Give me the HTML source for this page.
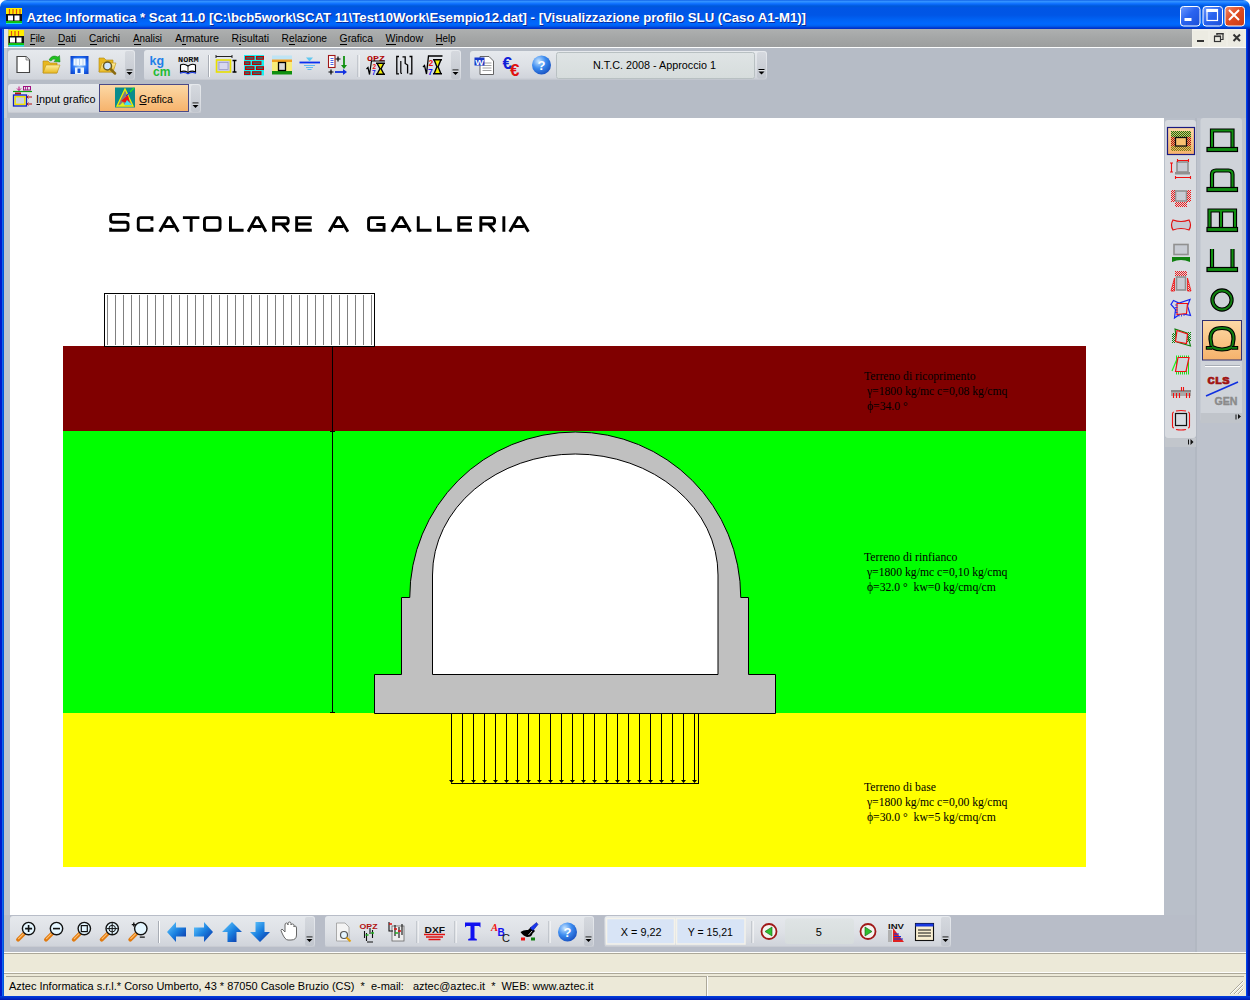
<!DOCTYPE html>
<html><head><meta charset="utf-8">
<style>
*{margin:0;padding:0;box-sizing:border-box}
html,body{width:1250px;height:1000px;overflow:hidden;background:#fff;font-family:"Liberation Sans",sans-serif}
.a{position:absolute}
#title{left:0;top:0;width:1250px;height:29px;border-radius:7px 7px 0 0;
background:linear-gradient(#0050e0 0px,#3a96ff 1px,#2a8cff 2px,#0a6cff 4px,#005ad8 6px,#0055e5 8px,#0056e6 15px,#0063f5 20px,#0068ff 24px,#0060ee 26px,#0035d0 28px,#0030c0 29px)}
#ttext{left:26px;top:6px;color:#fff;font-weight:bold;font-size:13px;white-space:nowrap;text-shadow:1px 1px 0 #0a1e8a;letter-spacing:0}
#menubar{left:4px;top:29px;width:1242px;height:18px;background:linear-gradient(#aeb0b0,#a4a6a6 50%,#9c9e9e)}
#wline{left:4px;top:47px;width:1242px;height:1px;background:#fbfcfd}
#band{left:4px;top:48px;width:1242px;height:70px;background:#b6bcc6}
.menu{top:31px;font-size:11px;color:#000;white-space:nowrap}
.tb{background:linear-gradient(#e4e7eb,#d9dde3 60%,#cdd2d9);border-radius:3px}
#canvas{left:10px;top:118px;width:1154px;height:797px;background:#fff;overflow:hidden}
#lborder{left:4px;top:118px;width:6px;height:834px;background:#bec3cc}
#rpanel{left:1164px;top:118px;width:82px;height:834px;background:#b9bfc9}
#bband{left:4px;top:915px;width:1242px;height:37px;background:#b8bdc8}
#beige{left:4px;top:952px;width:1242px;height:44px;background:#ece9d8}
</style></head><body>
<div class="a" id="title"></div>
<div class="a" style="left:0;top:29px;width:4px;height:971px;background:linear-gradient(90deg,#0018cc 0,#0018cc 2px,#1166ee 2px,#1166ee 3px,#0055dd 3px)"></div>
<div class="a" style="left:1246px;top:29px;width:4px;height:971px;background:linear-gradient(90deg,#0055dd 0,#0033ee 1px,#0018aa 2px,#001890 4px)"></div>
<div class="a" style="left:0;top:996px;width:1250px;height:4px;background:linear-gradient(#0040e0,#0018b0)"></div>
<div class="a" id="menubar"></div>
<div class="a" id="wline"></div>
<div class="a" id="band"></div>
<div class="a" id="lborder"></div>
<div class="a" id="rpanel"></div>
<div class="a" id="bband"></div>
<div class="a" id="beige"></div>
<div class="a" id="canvas"><svg class="a" style="left:0;top:0" width="1154" height="797" viewBox="10 118 1154 797">
<g shape-rendering="crispEdges">
<rect x="104.5" y="293.5" width="270" height="53" fill="#fff" stroke="#000" stroke-width="1"/>
<path d="M107.5 295V345M115.5 295V345M123.5 295V345M131.5 295V345M139.5 295V345M147.5 295V345M155.5 295V345M163.5 295V345M171.5 295V345M179.5 295V345M187.5 295V345M195.5 295V345M203.5 295V345M211.5 295V345M219.5 295V345M227.5 295V345M235.5 295V345M243.5 295V345M251.5 295V345M259.5 295V345M267.5 295V345M275.5 295V345M283.5 295V345M291.5 295V345M299.5 295V345M307.5 295V345M315.5 295V345M323.5 295V345M331.5 295V345M339.5 295V345M347.5 295V345M355.5 295V345M363.5 295V345M371.5 295V345" stroke="#808080" stroke-width="1"/>
<rect x="63" y="346" width="1023" height="85" fill="#800000"/>
<rect x="63" y="431" width="1023" height="282" fill="#00ff00"/>
<rect x="63" y="713" width="1023" height="154" fill="#ffff00"/>
<path d="M104 346.5H375" stroke="#000" stroke-width="1"/>
<path d="M332.5 346V713M330 431.5H335M330 712.5H335" stroke="#000" stroke-width="1"/>
</g>
<path d="M374.5 713.5V674.5H401.5V597.5H409.75A165.5 165.5 0 0 1 740.75 597.5H748.5V674.5H775.5V713.5Z" fill="#c0c0c0" stroke="#000" stroke-width="1"/>
<path d="M432.5 674.5V575A142.75 121 0 0 1 718.00 575V674.5Z" fill="#fff" stroke="#000" stroke-width="1"/>
<g shape-rendering="crispEdges">
<path d="M451.5 713V780M462.5 713V780M473.5 713V780M484.5 713V780M495.5 713V780M506.5 713V780M517.5 713V780M528.5 713V780M539.5 713V780M550.5 713V780M561.5 713V780M572.5 713V780M583.5 713V780M594.5 713V780M606.5 713V780M617.5 713V780M628.5 713V780M639.5 713V780M650.5 713V780M661.5 713V780M672.5 713V780M683.5 713V780M694.5 713V780M451 783.5H699M698.5 713V783.5" stroke="#000" stroke-width="1"/>
</g>
<path d="M449.0 780L454.0 780L451.5 783ZM460.0 780L465.0 780L462.5 783ZM471.0 780L476.0 780L473.5 783ZM482.0 780L487.0 780L484.5 783ZM493.0 780L498.0 780L495.5 783ZM504.0 780L509.0 780L506.5 783ZM515.0 780L520.0 780L517.5 783ZM526.0 780L531.0 780L528.5 783ZM537.0 780L542.0 780L539.5 783ZM548.0 780L553.0 780L550.5 783ZM559.0 780L564.0 780L561.5 783ZM570.0 780L575.0 780L572.5 783ZM581.0 780L586.0 780L583.5 783ZM592.0 780L597.0 780L594.5 783ZM604.0 780L609.0 780L606.5 783ZM615.0 780L620.0 780L617.5 783ZM626.0 780L631.0 780L628.5 783ZM637.0 780L642.0 780L639.5 783ZM648.0 780L653.0 780L650.5 783ZM659.0 780L664.0 780L661.5 783ZM670.0 780L675.0 780L672.5 783ZM681.0 780L686.0 780L683.5 783ZM692.0 780L697.0 780L694.5 783Z" fill="#000"/>
<text x="864" y="379.5" font-family="Liberation Serif" font-size="11.7" fill="#000"><tspan x="864" y="379.5">Terreno di ricoprimento</tspan><tspan x="864" y="394.5">&#160;γ=1800 kg/mc c=0,08 kg/cmq</tspan><tspan x="864" y="409.5">&#160;ϕ=34.0 °</tspan></text>
<text x="864" y="561" font-family="Liberation Serif" font-size="11.7" fill="#000"><tspan x="864" y="561">Terreno di rinfianco</tspan><tspan x="864" y="576">&#160;γ=1800 kg/mc c=0,10 kg/cmq</tspan><tspan x="864" y="591">&#160;ϕ=32.0 °&#160; kw=0 kg/cmq/cm</tspan></text>
<text x="864" y="791" font-family="Liberation Serif" font-size="11.7" fill="#000"><tspan x="864" y="791">Terreno di base</tspan><tspan x="864" y="806">&#160;γ=1800 kg/mc c=0,00 kg/cmq</tspan><tspan x="864" y="821">&#160;ϕ=30.0 °&#160; kw=5 kg/cmq/cm</tspan></text>
<path d="M128.05 216.85V214.35H113.15Q110.65 214.35 110.65 216.85V219.8Q110.65 222.3 113.15 222.3H125.55000000000001Q128.05 222.3 128.05 224.8V227.75Q128.05 230.25 125.55000000000001 230.25H110.65V227.75M151.95000000000002 220.64999999999998V217.64999999999998H140.75Q138.25 217.64999999999998 138.25 220.14999999999998V227.75Q138.25 230.25 140.75 230.25H151.95000000000002V227.25M159.70000000000002 231.7L167.85000000000002 217.64999999999998H170.25L178.39999999999998 231.7M164.25 226.47H173.85M182.9 217.64999999999998H199.4M191.15 217.64999999999998V231.7M206.95 217.64999999999998H217.55Q220.05 217.64999999999998 220.05 220.14999999999998V227.75Q220.05 230.25 217.55 230.25H206.95Q204.45 230.25 204.45 227.75V220.14999999999998Q204.45 217.64999999999998 206.95 217.64999999999998ZM230.45 216.2V230.25H243.6M248.10000000000002 231.7L255.8 217.64999999999998H258.2L265.9 231.7M252.425 226.47H261.575M273.65 231.7V217.64999999999998H285.75Q288.25 217.64999999999998 288.25 220.14999999999998V221.45Q288.25 223.95 285.75 223.95H273.65M281.68 223.95L288.55 231.7M311.8 217.64999999999998H296.65V230.25H311.8M296.65 223.95H310.8M329.2 231.7L337.34999999999997 217.64999999999998H339.74999999999994L347.9 231.7M333.75 226.47H343.34999999999997M384.05 217.64999999999998H371.05Q368.55 217.64999999999998 368.55 220.14999999999998V227.75Q368.55 230.25 371.05 230.25H384.05V224.45H376.3M391.8 231.7L399.95 217.64999999999998H402.34999999999997L410.5 231.7M396.35 226.47H405.95M418.25 216.2V230.25H431.5M438.45 216.2V230.25H451.8M472 217.64999999999998H458.75V230.25H472M458.75 223.95H471M480.84999999999997 231.7V217.64999999999998H492.05Q494.55 217.64999999999998 494.55 220.14999999999998V221.45Q494.55 223.95 492.05 223.95H480.84999999999997M488.385 223.95L494.85 231.7M503.84999999999997 216.2V231.7M509.7 231.7L517.8499999999999 217.64999999999998H520.25L528.4000000000001 231.7M514.25 226.47H523.85" fill="none" stroke="#000" stroke-width="2.9" stroke-linejoin="miter"/>
</svg></div>
<svg class="a" style="left:0;top:0" width="1250" height="1000" font-family="Liberation Sans">
<defs>
<linearGradient id="gTB" x1="0" y1="0" x2="0" y2="1"><stop offset="0" stop-color="#e6e9ed"/><stop offset="0.55" stop-color="#dde0e5"/><stop offset="1" stop-color="#cfd3da"/></linearGradient>
<linearGradient id="gBtnBlue" x1="0" y1="0" x2="1" y2="1"><stop offset="0" stop-color="#6e9bff"/><stop offset="0.45" stop-color="#2a64f0"/><stop offset="1" stop-color="#1a4fd8"/></linearGradient>
<linearGradient id="gBtnRed" x1="0" y1="0" x2="1" y2="1"><stop offset="0" stop-color="#f08a6a"/><stop offset="0.45" stop-color="#e04c22"/><stop offset="1" stop-color="#c83a14"/></linearGradient>
<linearGradient id="gOrange" x1="0" y1="0" x2="0" y2="1"><stop offset="0" stop-color="#fcd9a6"/><stop offset="1" stop-color="#f6b26b"/></linearGradient>
<linearGradient id="gGrip" x1="0" y1="0" x2="0" y2="1"><stop offset="0" stop-color="#c8ccd3"/><stop offset="1" stop-color="#b4b9c2"/></linearGradient>
<linearGradient id="gNTC" x1="0" y1="0" x2="0" y2="1"><stop offset="0" stop-color="#dfe4e5"/><stop offset="1" stop-color="#d6dcdc"/></linearGradient>
<radialGradient id="gHelp" cx="0.35" cy="0.3" r="0.75"><stop offset="0" stop-color="#c8e4ff"/><stop offset="0.5" stop-color="#3c8cf0"/><stop offset="1" stop-color="#1850c0"/></radialGradient>
<linearGradient id="gArrow" x1="0" y1="0" x2="1" y2="1"><stop offset="0" stop-color="#6cd0ff"/><stop offset="0.5" stop-color="#1a80e0"/><stop offset="1" stop-color="#0a2ca0"/></linearGradient>
<radialGradient id="gFloppyR" cx="0.5" cy="0.5" r="0.7"><stop offset="0" stop-color="#9cd0ff"/><stop offset="0.6" stop-color="#1e6af0"/><stop offset="1" stop-color="#0838c0"/></radialGradient>
<linearGradient id="gFloppy" x1="0" y1="0" x2="0" y2="1"><stop offset="0" stop-color="#1c5ce8"/><stop offset="1" stop-color="#0a3cb8"/></linearGradient>
<linearGradient id="gFolder" x1="0" y1="0" x2="0" y2="1"><stop offset="0" stop-color="#fff0a0"/><stop offset="1" stop-color="#e8b820"/></linearGradient>
<pattern id="pRed" width="2" height="2" patternUnits="userSpaceOnUse"><rect width="1" height="1" fill="#f01818"/><rect x="1" y="1" width="1" height="1" fill="#f01818"/></pattern>
<pattern id="pGreen" width="2" height="2" patternUnits="userSpaceOnUse"><rect width="2" height="2" fill="#e8b070"/><rect width="1" height="1" fill="#108010"/><rect x="1" y="1" width="1" height="1" fill="#108010"/></pattern>
<pattern id="pRedO" width="2" height="2" patternUnits="userSpaceOnUse"><rect width="2" height="2" fill="#e8b070"/><rect width="1" height="1" fill="#b01010"/><rect x="1" y="1" width="1" height="1" fill="#b01010"/></pattern>
<pattern id="pOlive" width="2" height="2" patternUnits="userSpaceOnUse"><rect width="2" height="2" fill="#e8b070"/><rect width="1" height="1" fill="#808010"/><rect x="1" y="1" width="1" height="1" fill="#808010"/></pattern>
<pattern id="pGreenT" width="2" height="2" patternUnits="userSpaceOnUse"><rect width="1" height="1" fill="#108010"/><rect x="1" y="1" width="1" height="1" fill="#108010"/></pattern>
<pattern id="pLime" width="2" height="2" patternUnits="userSpaceOnUse"><rect width="1" height="2" fill="#20e020"/></pattern>
</defs>
<g><rect x="6" y="8" width="16" height="16" fill="#ffee00"/><rect x="6" y="14" width="16" height="9" fill="#111"/><path d="M9.5 9v5M13 9v5M16.5 9v5M20 9v5" stroke="#e05010" stroke-width="1.2"/><rect x="8" y="15.5" width="5" height="5" fill="#fff"/><rect x="14.5" y="15.5" width="5" height="5" fill="#fff"/><rect x="6" y="21" width="16" height="2" fill="#10c010"/><rect x="6" y="23" width="16" height="1" fill="#20e0e0"/></g>
<text x="26.5" y="21.5" font-size="13.5" fill="#fff" font-weight="bold" text-anchor="start" textLength="779.5" lengthAdjust="spacingAndGlyphs" style="text-shadow:1px 1px 0 #0b2a99">Aztec Informatica * Scat 11.0 [C:\bcb5work\SCAT 11\Test10Work\Esempio12.dat] - [Visualizzazione profilo SLU (Caso A1-M1)]</text>
<rect x="1180.5" y="6.5" width="19.5" height="19.5" rx="3" fill="url(#gBtnBlue)" stroke="#fff" stroke-width="1"/>
<rect x="1203.0" y="6.5" width="19.5" height="19.5" rx="3" fill="url(#gBtnBlue)" stroke="#fff" stroke-width="1"/>
<rect x="1225.0" y="6.5" width="19.5" height="19.5" rx="3" fill="url(#gBtnRed)" stroke="#fff" stroke-width="1"/>
<rect x="1184.5" y="18" width="7" height="3" fill="#fff"/>
<rect x="1207" y="9.5" width="10.5" height="11" fill="none" stroke="#fff" stroke-width="1.2"/><rect x="1206.5" y="9" width="11.5" height="3" fill="#fff"/>
<path d="M1229 10L1239 20M1239 10L1229 20" stroke="#fff" stroke-width="2"/>
<rect x="4" y="29" width="4" height="18" fill="#e4e4e4"/><rect x="4" y="48" width="3" height="70" fill="#c8ccd2"/>
<g><rect x="8.5" y="30" width="15.5" height="16" fill="#ffee00"/><rect x="8.5" y="36" width="15.5" height="9" fill="#111"/><path d="M11.5 31v5M15 31v5M18.5 31v5" stroke="#e05010" stroke-width="1.2"/><rect x="10" y="37.5" width="5" height="5" fill="#fff"/><rect x="16.5" y="37.5" width="5" height="5" fill="#fff"/><rect x="8.5" y="43" width="15.5" height="2" fill="#10c010"/><rect x="8.5" y="45" width="15.5" height="1.5" fill="#20e0e0"/></g>
<text x="30" y="42" font-size="11" fill="#000" font-weight="normal" text-anchor="start" textLength="15" lengthAdjust="spacingAndGlyphs" >File</text>
<rect x="30" y="44" width="5" height="1" fill="#000"/>
<text x="58" y="42" font-size="11" fill="#000" font-weight="normal" text-anchor="start" textLength="18" lengthAdjust="spacingAndGlyphs" >Dati</text>
<rect x="58" y="44" width="7" height="1" fill="#000"/>
<text x="89" y="42" font-size="11" fill="#000" font-weight="normal" text-anchor="start" textLength="31" lengthAdjust="spacingAndGlyphs" >Carichi</text>
<rect x="90" y="44" width="7" height="1" fill="#000"/>
<text x="133" y="42" font-size="11" fill="#000" font-weight="normal" text-anchor="start" textLength="29" lengthAdjust="spacingAndGlyphs" >Analisi</text>
<rect x="134" y="44" width="7" height="1" fill="#000"/>
<text x="175" y="42" font-size="11" fill="#000" font-weight="normal" text-anchor="start" textLength="44" lengthAdjust="spacingAndGlyphs" >Armature</text>
<rect x="182" y="44" width="4" height="1" fill="#000"/>
<text x="231.6" y="42" font-size="11" fill="#000" font-weight="normal" text-anchor="start" textLength="37.4" lengthAdjust="spacingAndGlyphs" >Risultati</text>
<rect x="239" y="44" width="2" height="1" fill="#000"/>
<text x="281.6" y="42" font-size="11" fill="#000" font-weight="normal" text-anchor="start" textLength="45.4" lengthAdjust="spacingAndGlyphs" >Relazione</text>
<rect x="289" y="44" width="6" height="1" fill="#000"/>
<text x="339.6" y="42" font-size="11" fill="#000" font-weight="normal" text-anchor="start" textLength="33.4" lengthAdjust="spacingAndGlyphs" >Grafica</text>
<rect x="340" y="44" width="7" height="1" fill="#000"/>
<text x="385.6" y="42" font-size="11" fill="#000" font-weight="normal" text-anchor="start" textLength="37.4" lengthAdjust="spacingAndGlyphs" >Window</text>
<rect x="386" y="44" width="10" height="1" fill="#000"/>
<text x="435.6" y="42" font-size="11" fill="#000" font-weight="normal" text-anchor="start" textLength="20" lengthAdjust="spacingAndGlyphs" >Help</text>
<rect x="436" y="44" width="7" height="1" fill="#000"/>
<rect x="1192" y="29" width="54" height="18" fill="#efeee6"/>
<rect x="1193" y="31" width="15" height="15" fill="#ecebe2"/><rect x="1210" y="31" width="16" height="15" fill="#ecebe2"/><rect x="1228" y="31" width="15" height="15" fill="#ecebe2"/>
<rect x="1197" y="40" width="7" height="2" fill="#333"/>
<rect x="1214.5" y="36.5" width="6" height="5" fill="none" stroke="#333" stroke-width="1.2"/><rect x="1214" y="35.5" width="7" height="1.5" fill="#333"/><path d="M1217 35V33.5H1223V39.5H1221" fill="none" stroke="#333" stroke-width="1.2"/><rect x="1216.5" y="33" width="7" height="1.5" fill="#333"/>
<path d="M1233.5 34.5L1240 41M1240 34.5L1233.5 41" stroke="#333" stroke-width="2"/>
<rect x="8" y="50" width="127" height="30" rx="3" fill="url(#gTB)"/>
<rect x="8" y="79" width="127" height="1" fill="#c4c8cf" opacity="0.7"/>
<rect x="125" y="51" width="9" height="28" rx="2" fill="url(#gGrip)" opacity="0.55"/>
<path d="M126.5 70h6" stroke="#000" stroke-width="1"/><path d="M126.5 72h6l-3 3z" fill="#000"/>
<path d="M126.5 71h6" stroke="#fff" stroke-width="0.8" opacity="0.6"/>
<rect x="144" y="50" width="317" height="30" rx="3" fill="url(#gTB)"/>
<rect x="144" y="79" width="317" height="1" fill="#c4c8cf" opacity="0.7"/>
<rect x="451" y="51" width="9" height="28" rx="2" fill="url(#gGrip)" opacity="0.55"/>
<path d="M452.5 70h6" stroke="#000" stroke-width="1"/><path d="M452.5 72h6l-3 3z" fill="#000"/>
<path d="M452.5 71h6" stroke="#fff" stroke-width="0.8" opacity="0.6"/>
<rect x="470" y="51" width="297" height="28.5" rx="3" fill="url(#gTB)"/>
<rect x="470" y="78.5" width="297" height="1" fill="#c4c8cf" opacity="0.7"/>
<rect x="757" y="52" width="9" height="26.5" rx="2" fill="url(#gGrip)" opacity="0.55"/>
<path d="M758.5 69.5h6" stroke="#000" stroke-width="1"/><path d="M758.5 71.5h6l-3 3z" fill="#000"/>
<path d="M758.5 70.5h6" stroke="#fff" stroke-width="0.8" opacity="0.6"/>
<path d="M17 56.5H26L29.5 60V72.5H17Z" fill="#fff" stroke="#444" stroke-width="1.2"/><path d="M26 56.5V60H29.5" fill="#ddd" stroke="#777" stroke-width="0.8"/>
<path d="M43 61H48L50 63H57V73H43Z" fill="#e8b820" stroke="#b08810" stroke-width="0.6"/><path d="M43 73L46 65H60L57 73Z" fill="url(#gFolder)" stroke="#c09010" stroke-width="0.6"/>
<path d="M49 60Q52 54 58 57L59.5 55.5L60 62L54 61.5L56 59.5Q53 58 51 61Z" fill="#20c020" stroke="#108010" stroke-width="0.5"/>
<rect x="70.5" y="56" width="18" height="18" fill="url(#gFloppyR)"/><rect x="73.5" y="58.5" width="12" height="7" fill="#f0f8ff"/><path d="M76 59v6M79.5 59v6M83 59v6" stroke="#a8c8f0" stroke-width="0.8"/><rect x="75" y="67.5" width="9" height="6.5" fill="#e8f4ff"/><rect x="77.5" y="68.5" width="3" height="4.5" fill="#1a5ad8"/>
<path d="M99 58H104L106 60H113V72H99Z" fill="#e8b820" stroke="#b08810" stroke-width="0.6"/><path d="M99 72L102 63H116L113 72Z" fill="url(#gFolder)" stroke="#c09010" stroke-width="0.6"/>
<circle cx="107.5" cy="66" r="4" fill="#cfe6ff" stroke="#6a5a20" stroke-width="1.5"/><path d="M110.5 69L115 73.5" stroke="#8a6a10" stroke-width="2.5" stroke-linecap="round"/>
<text x="149.5" y="65" font-size="13.5" font-weight="bold" fill="#1e7fe8" textLength="14.5" lengthAdjust="spacingAndGlyphs">kg</text>
<text x="153" y="75.5" font-size="13" font-weight="bold" fill="#22bb33" textLength="17.5" lengthAdjust="spacingAndGlyphs">cm</text>
<text x="178" y="62" font-family="Liberation Mono" font-size="8" font-weight="bold" fill="#111" textLength="20.5" lengthAdjust="spacingAndGlyphs">NORM</text>
<path d="M188 66Q184 63 180.5 65V72Q184 70 188 72.5Q192 70 195.5 72V65Q192 63 188 66Z" fill="#fff" stroke="#000" stroke-width="1.1"/><path d="M188 66V72.5" stroke="#000" stroke-width="0.8"/><path d="M180 73.3Q184 71.5 188 73.8Q192 71.5 196 73.3" fill="none" stroke="#1030e0" stroke-width="1.2"/>
<rect x="208" y="55" width="1" height="22" fill="#a8adb5"/><rect x="209" y="55" width="1" height="22" fill="#fff"/>
<path d="M216 56.5H232M216 55V58M232 55V58" stroke="#222" stroke-width="1"/><rect x="216.5" y="60" width="14" height="12" fill="#c8c8e8" stroke="#e8e000" stroke-width="1.6"/><rect x="219" y="62.5" width="9" height="7" fill="#d8d8ee" stroke="#8888bb" stroke-width="0.6"/><path d="M234.5 60.5V72M232.5 60.5H236.5M232.5 72H236.5" stroke="#000" stroke-width="1.3"/>
<rect x="244" y="55" width="20" height="20.5" fill="#18f0f0"/>
<rect x="245.6" y="56.6" width="8.3" height="2.6" fill="#108888" stroke="#c00000" stroke-width="1.2"/><rect x="256.6" y="56.6" width="6.8" height="2.6" fill="#108888" stroke="#c00000" stroke-width="1.2"/><rect x="244.6" y="61.800000000000004" width="5.3" height="2.6" fill="#108888" stroke="#c00000" stroke-width="1.2"/><rect x="252.6" y="61.800000000000004" width="8.3" height="2.6" fill="#108888" stroke="#c00000" stroke-width="1.2"/><rect x="263.6" y="61.800000000000004" width="-0.19999999999999996" height="2.6" fill="#108888" stroke="#c00000" stroke-width="1.2"/><rect x="245.6" y="66.8" width="8.3" height="2.6" fill="#108888" stroke="#c00000" stroke-width="1.2"/><rect x="256.6" y="66.8" width="6.8" height="2.6" fill="#108888" stroke="#c00000" stroke-width="1.2"/><rect x="244.6" y="71.8" width="5.3" height="2.6" fill="#108888" stroke="#c00000" stroke-width="1.2"/><rect x="252.6" y="71.8" width="8.3" height="2.6" fill="#108888" stroke="#c00000" stroke-width="1.2"/><rect x="263.6" y="71.8" width="-0.19999999999999996" height="2.6" fill="#108888" stroke="#c00000" stroke-width="1.2"/>
<rect x="272" y="55.5" width="20" height="4" fill="#bfe4f4"/><rect x="272" y="59.5" width="20" height="2.5" fill="#f0a020"/><rect x="272" y="62" width="20" height="9" fill="#f8ec78"/><rect x="272" y="71" width="20" height="3.5" fill="#109010"/><rect x="278.5" y="62.5" width="7" height="8" fill="#d8d8d8" stroke="#000" stroke-width="1.3"/>
<path d="M299.5 62.5H320" stroke="#0a2ef0" stroke-width="1.8"/><path d="M306 57.5h7l-3.5 4z" fill="#60c8f0"/><path d="M304 65.5h11M306 67.5h7M307.5 69.5h4" stroke="#60b8f0" stroke-width="1"/>
<rect x="328.5" y="55.5" width="6.5" height="12" fill="#fff" stroke="#a01818" stroke-width="1.1"/><path d="M330.5 58.5h3M330.5 60.5h3M330.5 62.5h3M330.5 64.5h3" stroke="#2040e0" stroke-width="0.8"/>
<path d="M335.5 59h5M338 56.5v5" stroke="#000" stroke-width="1.2"/><path d="M344 56V66" stroke="#109010" stroke-width="1.8"/><path d="M341 65h6l-3 4z" fill="#109010"/>
<path d="M328.5 72h5M331 69.5v5" stroke="#000" stroke-width="1.2"/><path d="M335 72H344" stroke="#1030e0" stroke-width="1.8"/><path d="M343 69v6l4-3z" fill="#1030e0"/>
<rect x="357.5" y="55" width="1" height="22" fill="#a8adb5"/><rect x="358.5" y="55" width="1" height="22" fill="#fff"/>
<text x="367" y="60.5" font-family="Liberation Mono" font-size="8" font-weight="bold" fill="#b00808" textLength="18" lengthAdjust="spacingAndGlyphs">OPZ</text>
<path d="M366.5 69L368 67.5L369.5 74.5L371.5 61H385" fill="none" stroke="#000" stroke-width="1.2"/>
<text x="372.5" y="68.5" font-size="6.5" font-weight="bold" fill="#f01010">2</text><text x="372" y="75" font-size="6.5" font-weight="bold" fill="#1010f0">7</text>
<path d="M377.5 63.5L380.5 68.75L377.5 74H383.5L380.5 68.75L383.5 63.5Z" fill="#f4f000"/>
<path d="M377.2 63.5L379.9 68.75L377.2 74M383.8 63.5L381.1 68.75L383.8 74" fill="none" stroke="#000" stroke-width="1.4"/>
<path d="M376 63.3H385M376 74.2H385" stroke="#000" stroke-width="1.6"/>
<path d="M399 56.5H396.8V73.8H399M409.5 56.5H411.8V73.8H409.5" fill="none" stroke="#000" stroke-width="1.3"/>
<path d="M400.8 61V72.5Q400.8 73.5 402 73.5" fill="none" stroke="#000" stroke-width="1.2"/><path d="M402.5 56.8H405.2V63.5L407.6 65V73.6" fill="none" stroke="#000" stroke-width="1.3"/>
<path d="M423 67L424.5 65.5L426.5 74L428.5 56H442.5" fill="none" stroke="#000" stroke-width="1.3"/>
<text x="428.5" y="66" font-size="8.5" font-weight="bold" fill="#f01010">2</text><text x="428" y="74.5" font-size="8.5" font-weight="bold" fill="#1010f0">7</text>
<path d="M434.5 60L437.5 66.75L434.5 73.5H440.5L437.5 66.75L440.5 60Z" fill="#f4f000"/>
<path d="M434.2 60L436.9 66.75L434.2 73.5M440.8 60L438.1 66.75L440.8 73.5" fill="none" stroke="#000" stroke-width="1.4"/>
<path d="M433 59.8H442M433 73.7H442" stroke="#000" stroke-width="1.6"/>
<path d="M480 56.5H489L493.5 61V74.5H480Z" fill="#fff" stroke="#555" stroke-width="0.9"/><path d="M482.5 63h9M482.5 65.5h9M482.5 68h9M482.5 70.5h9" stroke="#888" stroke-width="0.8"/>
<rect x="474.5" y="57.5" width="10" height="8" fill="#1838c8"/><text x="475.3" y="64.5" font-size="7.5" font-weight="bold" fill="#fff" textLength="8.5" lengthAdjust="spacingAndGlyphs">W</text>
<text x="502.5" y="68.5" font-size="17" font-weight="bold" fill="#1020d8">€</text><text x="510" y="76" font-size="17" font-weight="bold" fill="#e01010">€</text>
<circle cx="541.5" cy="65" r="9.5" fill="url(#gHelp)"/><text x="541.5" y="70" font-size="13" font-weight="bold" fill="#fff" text-anchor="middle">?</text>
<rect x="556.5" y="52.5" width="198" height="26" rx="2" fill="url(#gNTC)" stroke="#b8c0c2" stroke-width="1"/>
<text x="593" y="69" font-size="11" fill="#000" font-weight="normal" text-anchor="start" textLength="123" lengthAdjust="spacingAndGlyphs" >N.T.C. 2008 - Approccio 1</text>
<rect x="8" y="84" width="193" height="29" rx="3" fill="url(#gTB)"/>
<rect x="8" y="112" width="193" height="1" fill="#c4c8cf" opacity="0.7"/>
<rect x="191" y="85" width="9" height="27" rx="2" fill="url(#gGrip)" opacity="0.55"/>
<path d="M192.5 103h6" stroke="#000" stroke-width="1"/><path d="M192.5 105h6l-3 3z" fill="#000"/>
<path d="M192.5 104h6" stroke="#fff" stroke-width="0.8" opacity="0.6"/>
<path d="M13 91.5H32" stroke="#10a010" stroke-width="1.2"/><path d="M19 86.5V90.5M17 88.5L19 90.5L21 88.5" fill="none" stroke="#c01080" stroke-width="1"/><rect x="23.5" y="86.5" width="7" height="3.5" fill="none" stroke="#a01080" stroke-width="1"/><path d="M25.5 87v3M27.5 87v3" stroke="#a01080" stroke-width="0.8"/>
<rect x="15" y="92.5" width="6" height="2" fill="#b01010"/><rect x="13.5" y="95" width="13" height="11" fill="#c8d0e0" stroke="#1020c0" stroke-width="1.3"/><rect x="15.2" y="96.7" width="9.6" height="7.6" fill="#c8d0e0" stroke="#f0e000" stroke-width="1.4"/>
<path d="M27 97h5M27 104h5" stroke="#b01010" stroke-width="1"/><path d="M28.5 95.5l-1.5 1.5l1.5 1.5M28.5 102.5l-1.5 1.5l1.5 1.5" fill="none" stroke="#b01010" stroke-width="0.8"/>
<text x="36" y="102.5" font-size="11.5" fill="#000" font-weight="normal" text-anchor="start" textLength="59.5" lengthAdjust="spacingAndGlyphs" >Input grafico</text>
<rect x="99.5" y="84.5" width="89" height="27" fill="url(#gOrange)" stroke="#4a4a88" stroke-width="1"/>
<rect x="115" y="87.5" width="20" height="20" fill="#0a8c8c"/><path d="M125 89L117 106H133Z" fill="#808080" stroke="#f0f000" stroke-width="1.3"/><path d="M121 101L128 95L130 104Z" fill="#f01010"/><path d="M127 100L132 105H124Z" fill="#40e0f0"/><path d="M119 106l4 -4l2 4z" fill="#e0f020"/><path d="M126 96L134 88" stroke="#1030f0" stroke-width="1"/><path d="M130 92L134 88" stroke="#20e020" stroke-width="1.2"/>
<text x="139" y="102.5" font-size="11.5" fill="#000" font-weight="normal" text-anchor="start" textLength="34" lengthAdjust="spacingAndGlyphs" >Grafica</text>
<rect x="139.5" y="104" width="7" height="1" fill="#000"/><rect x="36.5" y="104" width="3.5" height="1" fill="#000"/>
<rect x="1164" y="118" width="82" height="797" fill="#b9bfc9"/>
<rect x="1197" y="118" width="49" height="834" fill="#bdc2cc"/>
<rect x="1195" y="118" width="2" height="834" fill="#b2b8c2"/>
<rect x="1165" y="120" width="31" height="318" rx="3" fill="#d8dbe0"/>
<rect x="1167.5" y="127.5" width="27" height="27" fill="url(#gOrange)" stroke="#1a1a80" stroke-width="1.2"/>
<rect x="1171" y="131" width="20" height="6" fill="url(#pGreen)"/><rect x="1171" y="137" width="4" height="9" fill="url(#pRedO)"/><rect x="1187" y="137" width="4" height="9" fill="url(#pRedO)"/><rect x="1171" y="146" width="20" height="5" fill="url(#pOlive)"/>
<rect x="1175.5" y="137.5" width="11" height="8.5" fill="#f8c070" stroke="#111" stroke-width="1.3"/>
<rect x="1177" y="162" width="11" height="10" fill="#c8ccd4" stroke="#909090" stroke-width="1.6"/><rect x="1175" y="172" width="15" height="2.5" fill="#909090"/>
<path d="M1177 160.5h12M1175 177.5h16M1171.5 163v9M1170 163h3M1170 172h3M1175.5 176v3M1190.5 176v3M1177.5 159v3M1188.5 159v3" stroke="#f01010" stroke-width="1.1"/>
<rect x="1175.5" y="191" width="11" height="10" fill="#c8ccd4" stroke="#909090" stroke-width="1.6"/>
<rect x="1171" y="190" width="4" height="12" fill="url(#pRed)"/><rect x="1187" y="190" width="4" height="12" fill="url(#pRed)"/><rect x="1175" y="202" width="12" height="5" fill="url(#pRed)"/>
<path d="M1173 220Q1181 223 1189 220Q1192 225 1189 230Q1181 227 1173 230Q1170 225 1173 220Z" fill="#c8ccd4" stroke="#e01010" stroke-width="1.2"/>
<rect x="1174" y="244.5" width="14" height="10" fill="#c8ccd4" stroke="#909090" stroke-width="1.6"/><path d="M1172 257H1190V262Q1181 258 1172 262Z" fill="#108010"/>
<rect x="1175" y="271" width="12" height="5" fill="url(#pRed)"/><rect x="1176.5" y="277" width="9" height="13" fill="#c8ccd4" stroke="#909090" stroke-width="1.6"/><path d="M1174.5 278L1171 291H1174.5ZM1187.5 278L1191 291H1187.5Z" fill="url(#pRed)" stroke="#f01010" stroke-width="0.8"/>
<path d="M1173.5 300.5L1179 303L1190 299.5L1187.5 306L1190.5 315.5L1181 313.5L1174.5 318L1175.5 309.5L1171 304.5Z" fill="none" stroke="#1828f0" stroke-width="1.2"/>
<path d="M1177 303.5H1187.5L1186.5 313.5L1177 314.5Z" fill="#d0d4da" stroke="#f01010" stroke-width="1.2"/><path d="M1177.5 305h-2.5M1177.5 307.5h-2.5M1177.5 310h-2.5M1177.5 312.5h-2.5M1179 314.5v2M1181.5 314.5v2M1184 314v2" stroke="#1828f0" stroke-width="0.8"/>
<path d="M1175 329L1187 333L1190.5 346L1177 342Z" fill="none" stroke="#108010" stroke-width="1.1"/><rect x="1172" y="333" width="4" height="10" fill="url(#pGreenT)"/><rect x="1187" y="332" width="4" height="10" fill="url(#pGreenT)"/>
<path d="M1177 330.5L1187.5 334L1186.5 343.5L1175.5 341.5Z" fill="#d0d4da" stroke="#f01010" stroke-width="1.2"/>
<rect x="1176" y="355.5" width="13" height="19" fill="url(#pLime)"/><path d="M1172 371L1177 359" stroke="#20f020" stroke-width="1.2"/>
<path d="M1178 357.5H1189L1186 371.5H1175.5Z" fill="#d0d4da" stroke="#f01010" stroke-width="1.2"/>
<rect x="1171" y="390" width="20" height="6" fill="#a8a8a8"/><rect x="1171" y="390" width="20" height="2" fill="#888"/><path d="M1173.5 393v5M1176.5 393v5M1179.5 393v5M1186.5 393v5M1189.5 393v5M1181.5 387v4M1183.5 387v4" stroke="#f01010" stroke-width="1.1"/>
<rect x="1175.5" y="413.5" width="11" height="12" fill="#d8dce2" stroke="#111" stroke-width="1.2"/><path d="M1174 412Q1172.5 412 1172.5 414V426Q1172.5 428 1174 428M1188 412Q1189.5 412 1189.5 414V426Q1189.5 428 1188 428M1176 411Q1181 410 1186 411M1176 429.5Q1181 430.5 1186 429.5" fill="none" stroke="#f01010" stroke-width="1.1"/>
<rect x="1165" y="438" width="31" height="9" fill="#c2c6cc"/><path d="M1188.5 439.5v5" stroke="#111" stroke-width="1"/><path d="M1190.5 439l3 3l-3 3z" fill="#111"/>
<rect x="1200.5" y="118" width="41.5" height="304" rx="3" fill="#cfd3d9"/>
<rect x="1200.5" y="413" width="41.5" height="10" fill="#c0c4ca"/><path d="M1236 414.5v5" stroke="#111" stroke-width="1"/><path d="M1238 414l3 2.5l-3 2.5z" fill="#111"/>
<path d="M1212 148V130.5H1232.5V148" fill="none" stroke="#000" stroke-width="4.2" stroke-linejoin="miter"/><path d="M1212 148V130.5H1232.5V148" fill="none" stroke="#109010" stroke-width="2" stroke-linejoin="miter"/>
<rect x="1207" y="147.5" width="30.5" height="4" fill="#109010" stroke="#000" stroke-width="1.2"/>
<path d="M1212 188V174.5Q1212 170.5 1216 170.5H1228.5Q1232.5 170.5 1232.5 174.5V188" fill="none" stroke="#000" stroke-width="4.2" stroke-linejoin="miter"/><path d="M1212 188V174.5Q1212 170.5 1216 170.5H1228.5Q1232.5 170.5 1232.5 174.5V188" fill="none" stroke="#109010" stroke-width="2" stroke-linejoin="miter"/>
<rect x="1207" y="187.5" width="30.5" height="4" fill="#109010" stroke="#000" stroke-width="1.2"/>
<path d="M1209.5 210.5H1235V229H1209.5ZM1221 210.5V229" fill="none" stroke="#000" stroke-width="4.2" stroke-linejoin="miter"/><path d="M1209.5 210.5H1235V229H1209.5ZM1221 210.5V229" fill="none" stroke="#109010" stroke-width="2" stroke-linejoin="miter"/>
<rect x="1207" y="227.5" width="30.5" height="4" fill="#109010" stroke="#000" stroke-width="1.2"/>
<path d="M1212 249V268M1232.5 249V268" fill="none" stroke="#000" stroke-width="4.2" stroke-linejoin="miter"/><path d="M1212 249V268M1232.5 249V268" fill="none" stroke="#109010" stroke-width="2" stroke-linejoin="miter"/>
<rect x="1207" y="267.5" width="30.5" height="4" fill="#109010" stroke="#000" stroke-width="1.2"/>
<circle cx="1222" cy="300" r="9.6" fill="none" stroke="#000" stroke-width="4.2"/><circle cx="1222" cy="300" r="9.6" fill="none" stroke="#108010" stroke-width="2"/>
<rect x="1202.5" y="320.5" width="39" height="39.5" fill="url(#gOrange)" stroke="#303070" stroke-width="1"/>
<path d="M1211.8 347L1210.5 339Q1210 328 1222 328Q1234 328 1233.5 339L1232.2 347Q1222 352 1211.8 347Z" fill="none" stroke="#000" stroke-width="4.2"/><path d="M1211.8 347L1210.5 339Q1210 328 1222 328Q1234 328 1233.5 339L1232.2 347Q1222 352 1211.8 347Z" fill="none" stroke="#108010" stroke-width="2"/>
<path d="M1205.8 347.8H1212M1232 347.8H1238.2" stroke="#000" stroke-width="3.8"/><path d="M1206.8 347.8H1212M1232 347.8H1237.2" stroke="#108010" stroke-width="1.8"/>
<path d="M1205 365.5H1240" stroke="#a8adb5" stroke-width="1"/><path d="M1205 366.5H1240" stroke="#fff" stroke-width="1"/>
<text x="1207.5" y="384" font-family="Liberation Mono" font-size="11" font-weight="bold" fill="#a01010" stroke="#a01010" stroke-width="0.7" textLength="22" lengthAdjust="spacingAndGlyphs">CLS</text>
<path d="M1206 396L1238 382" stroke="#1030e0" stroke-width="1.6"/>
<text x="1214.5" y="405" font-size="11.5" font-weight="bold" fill="#8a8a8a" stroke="#8a8a8a" stroke-width="0.4" textLength="23" lengthAdjust="spacingAndGlyphs">GEN</text>
<rect x="10" y="916" width="305" height="31" rx="3" fill="url(#gTB)"/>
<rect x="10" y="946" width="305" height="1" fill="#c4c8cf" opacity="0.7"/>
<rect x="305" y="917" width="9" height="29" rx="2" fill="url(#gGrip)" opacity="0.55"/>
<path d="M306.5 937h6" stroke="#000" stroke-width="1"/><path d="M306.5 939h6l-3 3z" fill="#000"/>
<path d="M306.5 938h6" stroke="#fff" stroke-width="0.8" opacity="0.6"/>
<rect x="325" y="916" width="269" height="31" rx="3" fill="url(#gTB)"/>
<rect x="325" y="946" width="269" height="1" fill="#c4c8cf" opacity="0.7"/>
<rect x="584" y="917" width="9" height="29" rx="2" fill="url(#gGrip)" opacity="0.55"/>
<path d="M585.5 937h6" stroke="#000" stroke-width="1"/><path d="M585.5 939h6l-3 3z" fill="#000"/>
<path d="M585.5 938h6" stroke="#fff" stroke-width="0.8" opacity="0.6"/>
<rect x="604.5" y="916" width="346.5" height="31" rx="3" fill="url(#gTB)"/>
<rect x="604.5" y="946" width="346.5" height="1" fill="#c4c8cf" opacity="0.7"/>
<rect x="941" y="917" width="9" height="29" rx="2" fill="url(#gGrip)" opacity="0.55"/>
<path d="M942.5 937h6" stroke="#000" stroke-width="1"/><path d="M942.5 939h6l-3 3z" fill="#000"/>
<path d="M942.5 938h6" stroke="#fff" stroke-width="0.8" opacity="0.6"/>
<path d="M18.1 939.6L24.6 933.1" stroke="#e07a10" stroke-width="4" stroke-linecap="round"/><path d="M18.6 938.6L24.1 933.1" stroke="#ffc070" stroke-width="1.2" stroke-linecap="round"/>
<circle cx="28.6" cy="928.6" r="6.2" fill="#e4f6ff" stroke="#111" stroke-width="1.4"/>
<path d="M25.1 928.6h7M28.6 925.1v7" stroke="#111" stroke-width="1.6"/>
<path d="M46.0 939.6L52.5 933.1" stroke="#e07a10" stroke-width="4" stroke-linecap="round"/><path d="M46.5 938.6L52.0 933.1" stroke="#ffc070" stroke-width="1.2" stroke-linecap="round"/>
<circle cx="56.5" cy="928.6" r="6.2" fill="#e4f6ff" stroke="#111" stroke-width="1.4"/>
<path d="M53.0 928.6h7" stroke="#111" stroke-width="1.6"/>
<path d="M73.8 939.6L80.3 933.1" stroke="#e07a10" stroke-width="4" stroke-linecap="round"/><path d="M74.3 938.6L79.8 933.1" stroke="#ffc070" stroke-width="1.2" stroke-linecap="round"/>
<circle cx="84.3" cy="928.6" r="6.2" fill="#e4f6ff" stroke="#111" stroke-width="1.4"/>
<rect x="81.3" y="925.6" width="6" height="6" fill="none" stroke="#111" stroke-width="1.2"/>
<path d="M101.7 939.6L108.2 933.1" stroke="#e07a10" stroke-width="4" stroke-linecap="round"/><path d="M102.2 938.6L107.7 933.1" stroke="#ffc070" stroke-width="1.2" stroke-linecap="round"/>
<circle cx="112.2" cy="928.6" r="6.2" fill="#e4f6ff" stroke="#111" stroke-width="1.4"/>
<circle cx="112.2" cy="928.6" r="3.3" fill="none" stroke="#111" stroke-width="1"/><path d="M106.7 928.6h11M112.2 923.1v11" stroke="#111" stroke-width="1"/>
<path d="M130.3 939.6L136.8 933.1" stroke="#e07a10" stroke-width="4" stroke-linecap="round"/><path d="M130.8 938.6L136.3 933.1" stroke="#ffc070" stroke-width="1.2" stroke-linecap="round"/>
<circle cx="140.8" cy="928.6" r="6.2" fill="#e4f6ff" stroke="#111" stroke-width="1.4"/>
<path d="M131.8 924.6h4M133.8 922.6v4M139.8 937.1h5" stroke="#111" stroke-width="1.4"/>
<rect x="158" y="921" width="1" height="22" fill="#a8adb5"/><rect x="159" y="921" width="1" height="22" fill="#fff"/>
<path d="M167 932L176 922V927.5H186V936.5H176V942Z" fill="url(#gArrow)"/>
<path d="M213 932L204 922V927.5H194V936.5H204V942Z" fill="url(#gArrow)"/>
<path d="M232 922L242 932H236.5V942H227.5V932H222Z" fill="url(#gArrow)"/>
<path d="M260 942L270 932H264.5V922H255.5V932H250Z" fill="url(#gArrow)"/>
<path d="M282 933Q280 930 282 929L285 932V925Q285 923 286.5 923Q288 923 288 925V923.5Q288 922 289.5 922Q291 922 291 923.5V925Q291 924 292.5 924Q294 924 294 925.5V927Q294 926 295 926Q296.5 926 296.5 928V935Q296.5 940 291 940H288Q285 940 282 933Z" fill="#fff" stroke="#666" stroke-width="1"/>
<path d="M336.5 923H345L349 927V941H336.5Z" fill="#f4f4f4" stroke="#999" stroke-width="0.8"/><circle cx="344" cy="935" r="3.5" fill="#e4f4ff" stroke="#555" stroke-width="1.2"/><path d="M346.5 937.5L350.5 941.5" stroke="#e0a010" stroke-width="2"/>
<text x="359.5" y="929" font-size="7.5" font-weight="bold" fill="#b01010" textLength="18" lengthAdjust="spacingAndGlyphs">OPZ</text>
<path d="M364.5 938V931M366.5 941V933M370 934V928M372.5 938V930M367 942h6" fill="none" stroke="#111" stroke-width="1.1"/><path d="M365.5 935h3M371 933h3" stroke="#20b020" stroke-width="1.5"/>
<rect x="392" y="926" width="12" height="15" fill="#eee" stroke="#666" stroke-width="0.8"/><path d="M389 922V931H393M395 925V936M399 927V938M402 924V935" fill="none" stroke="#111" stroke-width="1.1"/><path d="M389 924h3M394 929h3M398 931h3" stroke="#e01010" stroke-width="1.3"/><path d="M395 933h3" stroke="#20b020" stroke-width="1.5"/>
<rect x="416.5" y="921" width="1" height="22" fill="#a8adb5"/><rect x="417.5" y="921" width="1" height="22" fill="#fff"/>
<text x="424.5" y="932.5" font-size="9" font-weight="bold" fill="#111" textLength="20.5" lengthAdjust="spacingAndGlyphs">DXF</text>
<path d="M424 934.5h21M426 937h17M428.5 939.5h12" stroke="#e01010" stroke-width="1.5"/>
<rect x="454.5" y="921" width="1" height="22" fill="#a8adb5"/><rect x="455.5" y="921" width="1" height="22" fill="#fff"/>
<path d="M465 922.5H480.5V927.5L479 926H474.5V938.2L476.8 939V940.5H468.2V939L470.5 938.2V926H466.5L465 927.5Z" fill="#1010f0"/>
<text x="491" y="930.5" font-family="Liberation Serif" font-style="italic" font-weight="bold" font-size="10.5" fill="#f01010">A</text><text x="497.5" y="936" font-family="Liberation Sans" font-weight="bold" font-size="10" fill="#1010f0">B</text><text x="502" y="941.5" font-family="Liberation Sans" font-size="11" fill="#111">C</text>
<path d="M520.5 932Q524 929.5 528 930L531 927L535 931L532.5 933.5Q532 937 527 937Q523 936 520.5 932Z" fill="#000"/><path d="M530 928L536.5 922.5L538 924.5L533 930.5Z" fill="#1838f0" stroke="#101080" stroke-width="0.5"/><path d="M528.5 935L532 931" stroke="#fff" stroke-width="0.8"/>
<rect x="521" y="937.5" width="4" height="3" fill="#f01010"/><rect x="531" y="937.5" width="4" height="3" fill="#108010"/>
<rect x="548.5" y="921" width="1" height="22" fill="#a8adb5"/><rect x="549.5" y="921" width="1" height="22" fill="#fff"/>
<circle cx="567.5" cy="932" r="9.5" fill="url(#gHelp)"/><text x="567.5" y="937" font-size="13" font-weight="bold" fill="#fff" text-anchor="middle">?</text>
<rect x="606.5" y="918.5" width="68" height="25.5" fill="#d8e4f6" stroke="#f4f2ea" stroke-width="1.5"/>
<rect x="676.5" y="918.5" width="68.5" height="25.5" fill="#d8e4f6" stroke="#f4f2ea" stroke-width="1.5"/>
<text x="620.8" y="936" font-size="11" fill="#000" font-weight="normal" text-anchor="start" textLength="40.7" lengthAdjust="spacingAndGlyphs" >X = 9,22</text>
<text x="687.7" y="936" font-size="11" fill="#000" font-weight="normal" text-anchor="start" textLength="45.2" lengthAdjust="spacingAndGlyphs" >Y = 15,21</text>
<rect x="751.5" y="921" width="1" height="22" fill="#a8adb5"/><rect x="752.5" y="921" width="1" height="22" fill="#fff"/>
<circle cx="769" cy="931.5" r="7.5" fill="#f4f4f0" stroke="#a01818" stroke-width="1.8"/>
<path d="M765 931.5L772 927.0V936.0Z" fill="#30c030" stroke="#106010" stroke-width="0.6"/>
<rect x="785" y="918.5" width="69" height="25.5" rx="3" fill="url(#gNTC)"/>
<text x="818.8" y="936" font-size="11" fill="#000" font-weight="normal" text-anchor="middle" >5</text>
<circle cx="868" cy="931.5" r="7.5" fill="#f4f4f0" stroke="#a01818" stroke-width="1.8"/>
<path d="M872 931.5L865 927.0V936.0Z" fill="#30c030" stroke="#106010" stroke-width="0.6"/>
<text x="888" y="928.5" font-size="7.5" font-weight="bold" fill="#111" textLength="16" lengthAdjust="spacingAndGlyphs">INV</text>
<rect x="888" y="930" width="4" height="12" fill="#b0b0b0"/><path d="M893 928L904 942H893Z" fill="#e02020"/><path d="M894 934h5M894 936.5h7M894 939h9" stroke="#1030e0" stroke-width="1"/>
<rect x="915.5" y="923.5" width="18" height="17" fill="#f8eed0" stroke="#111" stroke-width="1.1"/><rect x="915.5" y="923.5" width="18" height="3" fill="#1838e0"/><path d="M918 930h13M918 933h13M918 936h13" stroke="#111" stroke-width="1"/>
<rect x="4" y="952" width="1242" height="1" fill="#fdfdfb"/><rect x="4" y="953" width="1242" height="1" fill="#aca899"/>
<rect x="4" y="972" width="1242" height="1" fill="#fdfdfb"/><rect x="4" y="973" width="1242" height="1" fill="#aca899"/>
<rect x="6" y="976" width="700" height="1" fill="#aca899"/><rect x="708" y="976" width="536" height="1" fill="#aca899"/>
<rect x="706" y="976" width="1" height="20" fill="#aca899"/><rect x="707" y="976" width="1" height="20" fill="#fdfdfb"/>
<path d="M1230 994L1243 981M1234 994L1243 985M1238 994L1243 989" stroke="#aca899" stroke-width="1"/><path d="M1231 994L1244 981M1235 994L1244 985M1239 994L1244 989" stroke="#fff" stroke-width="1"/>
<text x="9" y="990" font-size="11" fill="#000" font-weight="normal" text-anchor="start" textLength="584.5" lengthAdjust="spacingAndGlyphs" >Aztec Informatica s.r.l.* Corso Umberto, 43 * 87050 Casole Bruzio (CS)&#160; *&#160; e-mail:&#160;&#160; aztec@aztec.it&#160; *&#160; WEB: www.aztec.it</text>
</svg>
</body></html>
